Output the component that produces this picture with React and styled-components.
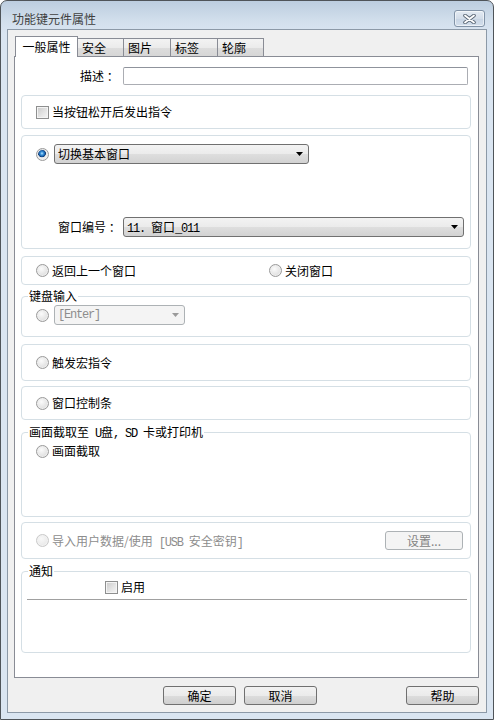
import React from "react";
import styled, { createGlobalStyle } from "styled-components";

const GlobalStyle = createGlobalStyle`
    html, body {
        margin: 0;
        padding: 0;
        background: #ffffff;
    }
    body {
        font-family: "Noto Sans CJK SC", "Noto Sans", sans-serif;
        font-size: 12px;
        line-height: 14px;
        color: #000000;
    }
    * {
        box-sizing: border-box;
    }
`;

const Window = styled.div`
    width: 494px;
    height: 720px;
    display: flex;
    flex-direction: column;
    border: 1px solid #4f5459;
    border-radius: 7px 7px 0 0;
    background: linear-gradient(to bottom, #bccddf 0px, #d2dfec 20px, #dae5f1 32px, #dae5f1 100%);
    overflow: hidden;
`;

const TitleBar = styled.div`
    height: 28px;
    display: flex;
    align-items: flex-start;
    justify-content: space-between;
    padding: 9px 8px 0 11px;
`;

const TitleText = styled.span`
    margin-top: 2px;
    font-size: 12px;
    line-height: 14px;
    color: #3f3f3f;
`;

const CloseButton = styled.div`
    width: 31px;
    height: 17px;
    display: flex;
    align-items: center;
    justify-content: center;
    border: 1px solid #8293a7;
    border-radius: 3px;
    background: linear-gradient(to bottom, #e4ebf3, #d3dde9 50%, #c7d4e3 51%, #d3dfec);
    box-shadow: inset 0 0 0 1px rgba(255, 255, 255, 0.55);
`;

const Client = styled.div`
    flex: 1;
    margin: 0 6px 6px 6px;
    border: 1px solid #8c99a7;
    background: #f0f0f0;
    padding: 6px 7px 0 6px;
    display: flex;
    flex-direction: column;
`;

const TabStrip = styled.div`
    height: 20px;
    display: flex;
    align-items: flex-end;
    padding-left: 1px;
`;

const Tab = styled.div`
    position: relative;
    z-index: ${(p) => (p.$active ? 2 : 1)};
    width: ${(p) => p.$w}px;
    height: ${(p) => (p.$active ? 21 : 18)}px;
    margin-bottom: ${(p) => (p.$active ? -1 : 0)}px;
    margin-left: ${(p) => (p.$active ? 0 : -1)}px;
    padding: ${(p) => (p.$active ? "3px 0 0 0" : "2px 0 0 4px")};
    text-align: ${(p) => (p.$active ? "center" : "left")};
    border: 1px solid #898c95;
    border-bottom: none;
    background: ${(p) =>
        p.$active ? "#ffffff" : "linear-gradient(to bottom, #f3f3f3, #ebebeb 50%, #dddddd 51%, #d6d6d6)"};
`;

const Panel = styled.div`
    height: 622px;
    border: 1px solid #898c95;
    background: #ffffff;
    padding: 0 7px 0 6px;
    display: flex;
    flex-direction: column;
`;

const FieldRow = styled.div`
    display: flex;
    align-items: center;
    margin-top: ${(p) => p.$mt || 0}px;
`;

const FieldLabel = styled.span`
    width: ${(p) => p.$w}px;
    padding-left: ${(p) => p.$indent}px;
    white-space: nowrap;
    flex-shrink: 0;
`;

const TextInput = styled.div`
    width: 345px;
    height: 18px;
    border: 1px solid #abadb3;
    border-top-color: #8f939c;
    border-radius: 2px;
    background: #ffffff;
`;

const Section = styled.div`
    margin-top: ${(p) => p.$mt}px;
    display: flex;
    flex-direction: column;
`;

const Legend = styled.span`
    position: relative;
    z-index: 1;
    align-self: flex-start;
    height: 13px;
    margin: 0 0 -6px 7px;
    padding: 0 1px;
    background: #ffffff;
    line-height: 13px;
    white-space: pre;
`;

const Box = styled.div`
    height: ${(p) => p.$h}px;
    border: 1px solid #d5dfe5;
    border-radius: 4px;
    padding: ${(p) => p.$pad || "0 0 0 14px"};
    display: flex;
    flex-direction: column;
    justify-content: ${(p) => (p.$center ? "center" : "flex-start")};
`;

const Row = styled.div`
    display: flex;
    align-items: center;
    margin-top: ${(p) => p.$mt || 0}px;
    margin-left: ${(p) => p.$ml || 0}px;
`;

const Option = styled.label`
    display: flex;
    align-items: center;
    gap: ${(p) => p.$gap || 3}px;
    height: 14px;
    color: ${(p) => (p.$disabled ? "#8d8d8d" : "#000000")};
    white-space: pre;
    width: ${(p) => (p.$w ? `${p.$w}px` : "auto")};
`;

const RadioDot = styled.span`
    width: 13px;
    height: 13px;
    border-radius: 50%;
    flex-shrink: 0;
    border: 1px solid ${(p) => (p.$disabled ? "#c9c9c9" : "#9a9a9a")};
    background: ${(p) =>
        p.$checked
            ? "radial-gradient(circle at 45% 40%, #bfe6ff 0, #3d97dd 1.5px, #155aa6 3px, #0f3a70 3.6px, #e9e9e9 4.2px, #f8f8f8 100%)"
            : p.$disabled
            ? "radial-gradient(circle at 40% 35%, #f8f8f8, #e3e3e3)"
            : "radial-gradient(circle at 40% 35%, #fbfbfb, #d4d4d4)"};
    box-shadow: inset 0 0 0 1px ${(p) => (p.$disabled ? "#f2f2f2" : "#eeeeee")};
`;

const CheckBoxMark = styled.span`
    width: 13px;
    height: 13px;
    flex-shrink: 0;
    border: 1px solid #8e8f8f;
    background: linear-gradient(135deg, #c9c9c9, #e4e4e4 55%, #f6f6f6);
    box-shadow: inset 0 0 0 1px #f4f4f4;
`;

const Combo = styled.div`
    width: ${(p) => p.$w}px;
    height: 20px;
    display: flex;
    align-items: center;
    justify-content: space-between;
    padding: 0 5px 0 3px;
    border: 1px solid ${(p) => (p.$disabled ? "#adb2b5" : "#707070")};
    border-radius: 3px;
    color: ${(p) => (p.$disabled ? "#8d8d8d" : "#000000")};
    background: ${(p) =>
        p.$disabled ? "#f4f4f4" : "linear-gradient(to bottom, #f3f3f3, #ebebeb 50%, #dedede 51%, #d2d2d2)"};
    white-space: pre;
`;

const Mono = styled.span`
    font-family: "Liberation Mono", "Noto Sans CJK SC", monospace;
    font-size: 12px;
    letter-spacing: -1.2px;
    line-height: 0;
    white-space: pre;
`;

const PushButton = styled.div`
    width: ${(p) => p.$w || 73}px;
    height: 19px;
    display: flex;
    align-items: center;
    justify-content: center;
    border: 1px solid ${(p) => (p.$disabled ? "#adb2b5" : "#707070")};
    border-radius: 3px;
    color: ${(p) => (p.$disabled ? "#838383" : "#000000")};
    background: ${(p) =>
        p.$disabled ? "#f4f4f4" : "linear-gradient(to bottom, #f2f2f2, #ebebeb 50%, #dddddd 51%, #cfcfcf)"};
    margin-left: ${(p) => (p.$push ? "auto" : "0")};
`;

const Separator = styled.div`
    height: 1px;
    margin: 5px 3px 0 0;
    background: #a0a0a0;
`;

const ButtonBar = styled.div`
    display: flex;
    gap: 8px;
    margin-top: 8px;
    padding-left: 149px;
`;

const Arrow = ({ color = "#000" }) => (
    <svg width="7" height="4" viewBox="0 0 7 4">
        <path d="M0 0 L7 0 L3.5 4 Z" fill={color} />
    </svg>
);

const CloseGlyph = () => (
    <svg width="15" height="10" viewBox="0 0 15 10">
        <path d="M3 1.5 L12 8.5 M12 1.5 L3 8.5" stroke="#5b6877" strokeWidth="3.6" strokeLinecap="round" />
        <path d="M3 1.5 L12 8.5 M12 1.5 L3 8.5" stroke="#ffffff" strokeWidth="1.8" strokeLinecap="round" />
    </svg>
);

const Radio = ({ checked, disabled, children, gap, w }) => (
    <Option $disabled={disabled} $gap={gap} $w={w}>
        <RadioDot $checked={checked} $disabled={disabled} />
        <span>{children}</span>
    </Option>
);

const Check = ({ children }) => (
    <Option>
        <CheckBoxMark />
        <span>{children}</span>
    </Option>
);

const tabs = [
    { label: "一般属性", w: 63, active: true },
    { label: "安全", w: 47 },
    { label: "图片", w: 48 },
    { label: "标签", w: 48 },
    { label: "轮廓", w: 47 },
];

export default function App() {
    return (
        <>
            <GlobalStyle />
            <Window>
                <TitleBar>
                    <TitleText>功能键元件属性</TitleText>
                    <CloseButton>
                        <CloseGlyph />
                    </CloseButton>
                </TitleBar>
                <Client>
                    <TabStrip>
                        {tabs.map((t) => (
                            <Tab key={t.label} $w={t.w} $active={t.active}>
                                {t.label}
                            </Tab>
                        ))}
                    </TabStrip>
                    <Panel>
                        <FieldRow $mt={10}>
                            <FieldLabel $w={102} $indent={59}>描述 ：</FieldLabel>
                            <TextInput />
                        </FieldRow>

                        <Section $mt={10}>
                            <Box $h={34} $center>
                                <Check>当按钮松开后发出指令</Check>
                            </Box>
                        </Section>

                        <Section $mt={6}>
                            <Box $h={114} $pad="11px 0 0 14px">
                                <Row>
                                    <Radio checked gap={5}>
                                        <Combo $w={255}>
                                            <span>切换基本窗口</span>
                                            <Arrow />
                                        </Combo>
                                    </Radio>
                                </Row>
                                <Row $mt={56}>
                                    <FieldLabel $w={87} $indent={22}>窗口编号 ：</FieldLabel>
                                    <Combo $w={341}>
                                        <span>
                                            <Mono>{"11. "}</Mono>窗口<Mono>_011</Mono>
                                        </span>
                                        <Arrow />
                                    </Combo>
                                </Row>
                            </Box>
                        </Section>

                        <Section $mt={7}>
                            <Box $h={29} $center>
                                <Row>
                                    <Radio w={233}>返回上一个窗口</Radio>
                                    <Radio>关闭窗口</Radio>
                                </Row>
                            </Box>
                        </Section>

                        <Section $mt={4}>
                            <Legend>键盘输入</Legend>
                            <Box $h={41} $pad="11px 0 0 14px">
                                <Radio gap={5}>
                                    <Combo $w={131} $disabled>
                                        <Mono>[Enter]</Mono>
                                        <Arrow color="#9a9a9a" />
                                    </Combo>
                                </Radio>
                            </Box>
                        </Section>

                        <Section $mt={7}>
                            <Box $h={37} $center>
                                <Radio>触发宏指令</Radio>
                            </Box>
                        </Section>

                        <Section $mt={5}>
                            <Box $h={34} $center>
                                <Radio>窗口控制条</Radio>
                            </Box>
                        </Section>

                        <Section $mt={5}>
                            <Legend>
                                画面截取至<Mono>{" U"}</Mono>盘<Mono>{", SD "}</Mono>卡或打印机
                            </Legend>
                            <Box $h={85} $pad="11px 0 0 14px">
                                <Radio>画面截取</Radio>
                            </Box>
                        </Section>

                        <Section $mt={5}>
                            <Box $h={37} $center $pad="0 7px 0 14px">
                                <Row>
                                    <Radio disabled>
                                        导入用户数据/使用<Mono>{" [USB "}</Mono>安全密钥<Mono>]</Mono>
                                    </Radio>
                                    <PushButton $w={78} $disabled $push>
                                        设置...
                                    </PushButton>
                                </Row>
                            </Box>
                        </Section>

                        <Section $mt={5}>
                            <Legend>通知</Legend>
                            <Box $h={82} $pad="8px 0 0 5px">
                                <Row $ml={78}>
                                    <Check>启用</Check>
                                </Row>
                                <Separator />
                            </Box>
                        </Section>
                    </Panel>
                    <ButtonBar>
                        <PushButton $w={73}>确定</PushButton>
                        <PushButton $w={73}>取消</PushButton>
                        <PushButton $w={73} $push>帮助</PushButton>
                    </ButtonBar>
                </Client>
            </Window>
        </>
    );
}
